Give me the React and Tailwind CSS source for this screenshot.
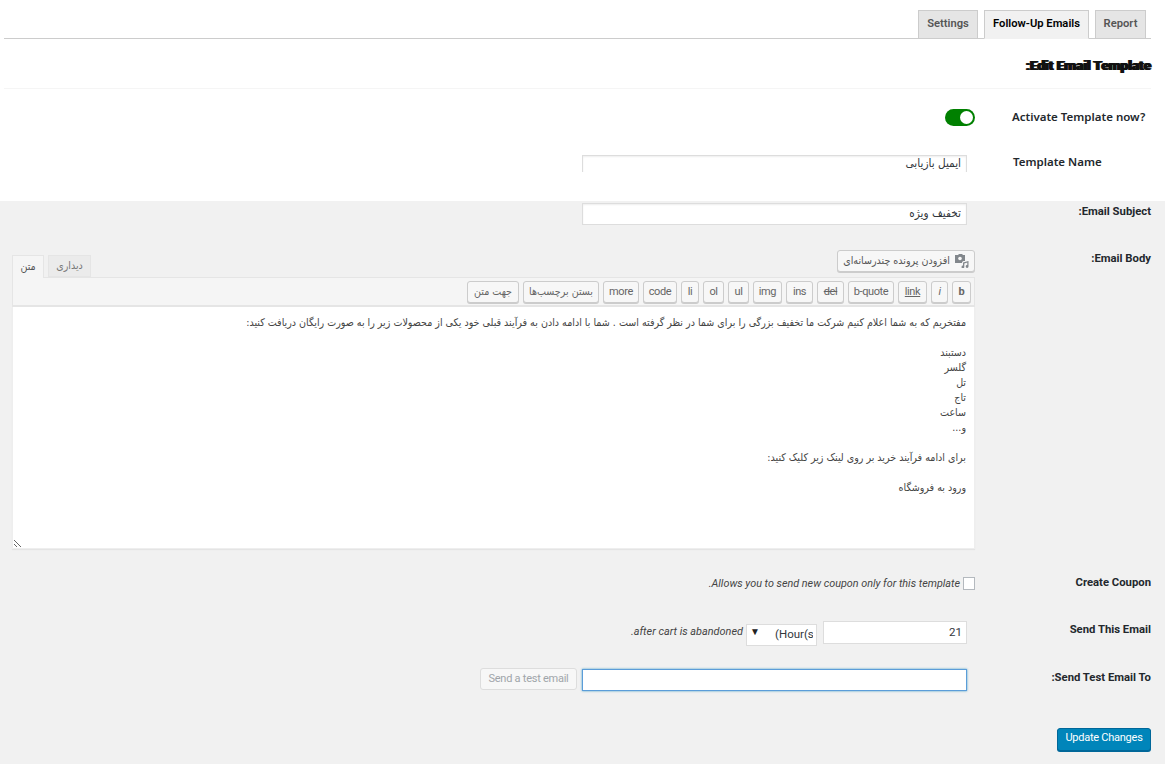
import React from 'react';

const faFont = "font-['DejaVu_Sans_Condensed','DejaVu_Sans',sans-serif]";

const toolbarButtons = [
  { key: 'b', text: 'b', className: 'w-[19px] font-bold' },
  { key: 'i', text: 'i', className: 'w-[17px] italic' },
  { key: 'link', text: 'link', className: 'w-[29px] underline' },
  { key: 'bquote', text: 'b-quote', className: 'w-[46px]' },
  { key: 'del', text: 'del', className: 'w-[27px] line-through' },
  { key: 'ins', text: 'ins', className: 'w-[27px]' },
  { key: 'img', text: 'img', className: 'w-[29px]' },
  { key: 'ul', text: 'ul', className: 'w-[21px]' },
  { key: 'ol', text: 'ol', className: 'w-[21px]' },
  { key: 'li', text: 'li', className: 'w-[18px]' },
  { key: 'code', text: 'code', className: 'w-[34px]' },
  { key: 'more', text: 'more', className: 'w-[36px]' },
  { key: 'close', text: 'بستن برچسب‌ها', className: 'w-[76px]', fa: true },
  { key: 'dir', text: 'جهت متن', className: 'w-[52px]', fa: true },
];

const bodyText = `مفتخریم که به شما اعلام کنیم شرکت ما تخفیف بزرگی را برای شما در نظر گرفته است . شما با ادامه دادن به فرآیند قبلی خود یکی از محصولات زیر را به صورت رایگان دریافت کنید:

دستبند
گلسر
تل
تاج
ساعت
و...

برای ادامه فرآیند خرید بر روی لینک زیر کلیک کنید:

ورود به فروشگاه`;

const Label = ({ children, className = '' }) => (
  <div dir="rtl" className={`flex-1 text-[11.3px] font-bold text-[#23282d] ${className}`}>{children}</div>
);

const MediaIcon = () => (
  <svg width="14" height="14" viewBox="0 0 14 14" className="shrink-0 text-[#82878c]">
    <path fill="currentColor" d="M0 1h3l1-1h3l1 1h2v6H8.5a2.5 2.5 0 0 0-1.5 1.5V9H0z" />
    <circle cx="5" cy="4.5" r="1.8" fill="#f7f7f7" />
    <path fill="currentColor" d="M8 8.5l5.5-1.5v5.5a1.4 1.4 0 1 1-1.2-1.4V8.6l-3 .8v3.6a1.4 1.4 0 1 1-1.3-1.4z" />
  </svg>
);

const App = () => {
  return (
    <div className="min-h-[764px] bg-[#f1f1f1] font-['Roboto',sans-serif] text-[#444]">
      <div className="h-[201px] overflow-hidden bg-white pt-[10px]">
        <div className="ml-1 mr-[14px] flex h-[29px] justify-end gap-[6px] border-b border-[#ccc] pr-[5px]">
          <div className="flex h-[29px] w-[60px] items-center justify-center border border-[#ccc] bg-[#e5e5e5] text-[11.2px] font-semibold text-[#555]">Settings</div>
          <div className="flex h-[29px] w-[105px] items-center justify-center border border-[#ccc] border-b-[#f1f1f1] bg-[#f1f1f1] text-[11.2px] font-semibold text-[#000]">Follow-Up Emails</div>
          <div className="flex h-[29px] w-[51px] items-center justify-center border border-[#ccc] bg-[#e5e5e5] text-[11.2px] font-semibold text-[#555]">Report</div>
        </div>
        <div className="ml-1 mr-[14px] flex h-[50px] items-center justify-end border-b border-[#f5f5f5] pt-1">
          <h2 dir="rtl" className="text-[13.6px] font-bold text-[#111] [text-shadow:1px_0_0_#111,-1px_0_0_#111]">Edit Email Template:</h2>
        </div>
        <div className="flex pl-3 pr-[14px] pt-5">
          <div className="flex w-[963px] justify-end">
            <div className="flex h-[17px] w-[30px] items-center justify-end rounded-full bg-[#008000] pr-[2px]">
              <div className="h-[13px] w-[13px] rounded-full bg-white" />
            </div>
          </div>
          <div className="flex-1 pl-[37px] font-['Noto_Sans',sans-serif] text-[11.5px] font-semibold leading-[16px] text-[#23282d]">Activate Template now?</div>
        </div>
        <div className="flex pl-3 pr-[14px] pt-[29px]">
          <div className="flex w-[963px] justify-end pr-2">
            <input dir="rtl" readOnly defaultValue="ایمیل بازیابی" className={`h-[17px] w-[385px] border border-b-0 border-[#ddd] bg-white px-[5px] text-[11.7px] text-[#32373c] shadow-[inset_0_1px_2px_rgba(0,0,0,0.07)] outline-none ${faFont}`} />
          </div>
          <div className="flex-1 pl-[38px] font-['Noto_Sans',sans-serif] text-[11.5px] font-semibold leading-[14px] text-[#23282d]">Template Name</div>
        </div>
      </div>

      <div className="flex pl-3 pr-[14px] pt-[2px]">
        <div className="flex w-[963px] justify-end pr-2">
          <input dir="rtl" readOnly defaultValue="تخفیف ویژه" className={`h-[22px] w-[385px] border border-[#ddd] bg-white px-[5px] pb-[2px] text-[11.7px] text-[#32373c] shadow-[inset_0_1px_2px_rgba(0,0,0,0.07)] outline-none ${faFont}`} />
        </div>
        <Label className="pt-[2px] leading-[14px]">Email Subject:</Label>
      </div>

      <div className="flex pl-3 pr-[14px] pt-[25px]">
        <div dir="rtl" className="w-[963px]">
          <div className="flex h-[27px] items-start justify-between">
            <button className={`flex h-[22px] w-[138px] items-center justify-center gap-[5px] whitespace-nowrap rounded-[3px] border border-[#ccc] bg-[#f7f7f7] text-[10.6px] text-[#555] shadow-[0_1px_0_#ccc] ${faFont}`}>
              <MediaIcon />
              افزودن پرونده چندرسانه‌ای
            </button>
            <div className={`mt-[5px] flex ${faFont}`}>
              <div className="ml-[4px] flex h-[22px] w-[43px] items-center justify-center border border-[#e5e5e5] bg-[#ebebeb] text-[10.6px] text-[#777]">دیداری</div>
              <div className="flex h-[23px] w-[32px] items-center justify-center border border-b-0 border-[#e5e5e5] bg-[#f5f5f5] text-[10.6px] text-[#555]">متن</div>
            </div>
          </div>
          <div className="flex h-[30px] items-center gap-1 border border-b-2 border-[#e5e5e5] bg-[#f5f5f5] px-[3px]">
            {toolbarButtons.map(btn => (
              <button
                key={btn.key}
                className={`h-[22px] rounded-[3px] border border-[#ccc] bg-[#f7f7f7] pt-[1px] text-[#666] shadow-[0_1px_0_#ccc] ${btn.fa ? `text-[10.6px] ${faFont}` : 'text-[11px] tracking-[-0.4px]'} ${btn.className}`}
              >
                {btn.text}
              </button>
            ))}
          </div>
          <textarea
            dir="rtl"
            readOnly
            defaultValue={bodyText}
            className={`block h-[242px] w-full border border-t-0 border-[#eee] bg-white px-2 pt-2 text-[10.6px] leading-[15px] text-[#444] shadow-[0_1px_1px_rgba(0,0,0,0.05)] outline-none ${faFont}`}
          />
        </div>
        <Label className="pt-[2px] leading-[14px]">Email Body:</Label>
      </div>

      <div className="flex items-center pl-3 pr-[14px] pt-[27px]">
        <div dir="rtl" className="flex h-[14px] w-[963px] items-center gap-[3px]">
          <div className="h-[13px] w-[12px] border border-[#b4b9be] bg-white" />
          <span className="text-[10.8px] italic text-[#444]">Allows you to send new coupon only for this template.</span>
        </div>
        <Label className="-mt-[1px]">Create Coupon</Label>
      </div>

      <div className="flex items-center pl-3 pr-[14px] pt-[29px]">
        <div dir="rtl" className="flex w-[963px] items-center pr-2">
          <input dir="rtl" readOnly defaultValue="21" className="h-[23px] w-[144px] border border-[#ddd] bg-white px-[4px] text-[11.5px] text-[#32373c] outline-none" />
          <div className="relative mr-[6px] h-[22px] w-[71px]">
            <select dir="ltr" defaultValue="hours" className="h-[22px] w-full appearance-none rounded-none border border-[#ddd] bg-white pl-7 pr-[3px] text-right text-[11.5px] text-[#32373c] outline-none">
              <option value="hours">(Hour(s</option>
            </select>
            <span className="absolute left-[4px] top-[5px] text-[10px] leading-[12px] text-[#222]">▼</span>
          </div>
          <span className="mr-[3px] text-[10.9px] italic text-[#444]">after cart is abandoned.</span>
        </div>
        <Label className="-mt-[4px]">Send This Email</Label>
      </div>

      <div className="flex items-center pl-3 pr-[14px] pt-[25px]">
        <div dir="rtl" className="flex w-[963px] items-center gap-[5px] pr-2">
          <input readOnly className="h-[22px] w-[385px] border border-[#5b9dd9] bg-white shadow-[0_0_2px_rgba(30,140,190,0.8)] outline-none" />
          <button className="-mt-[2px] h-[22px] w-[97px] rounded-[3px] border border-[#ddd] bg-[#f7f7f7] text-[11px] tracking-[-0.25px] text-[#a0a5aa]">Send a test email</button>
        </div>
        <Label className="-mt-[3px]">Send Test Email To:</Label>
      </div>

      <div className="flex justify-end pr-[14px] pt-[37px]">
        <button className="h-[23px] w-[94px] rounded-[3px] border border-[#006799] bg-[#0085ba] pb-[2px] text-[11px] tracking-[-0.25px] text-white shadow-[0_1px_0_#006799]">Update Changes</button>
      </div>
    </div>
  );
};

export default App;
